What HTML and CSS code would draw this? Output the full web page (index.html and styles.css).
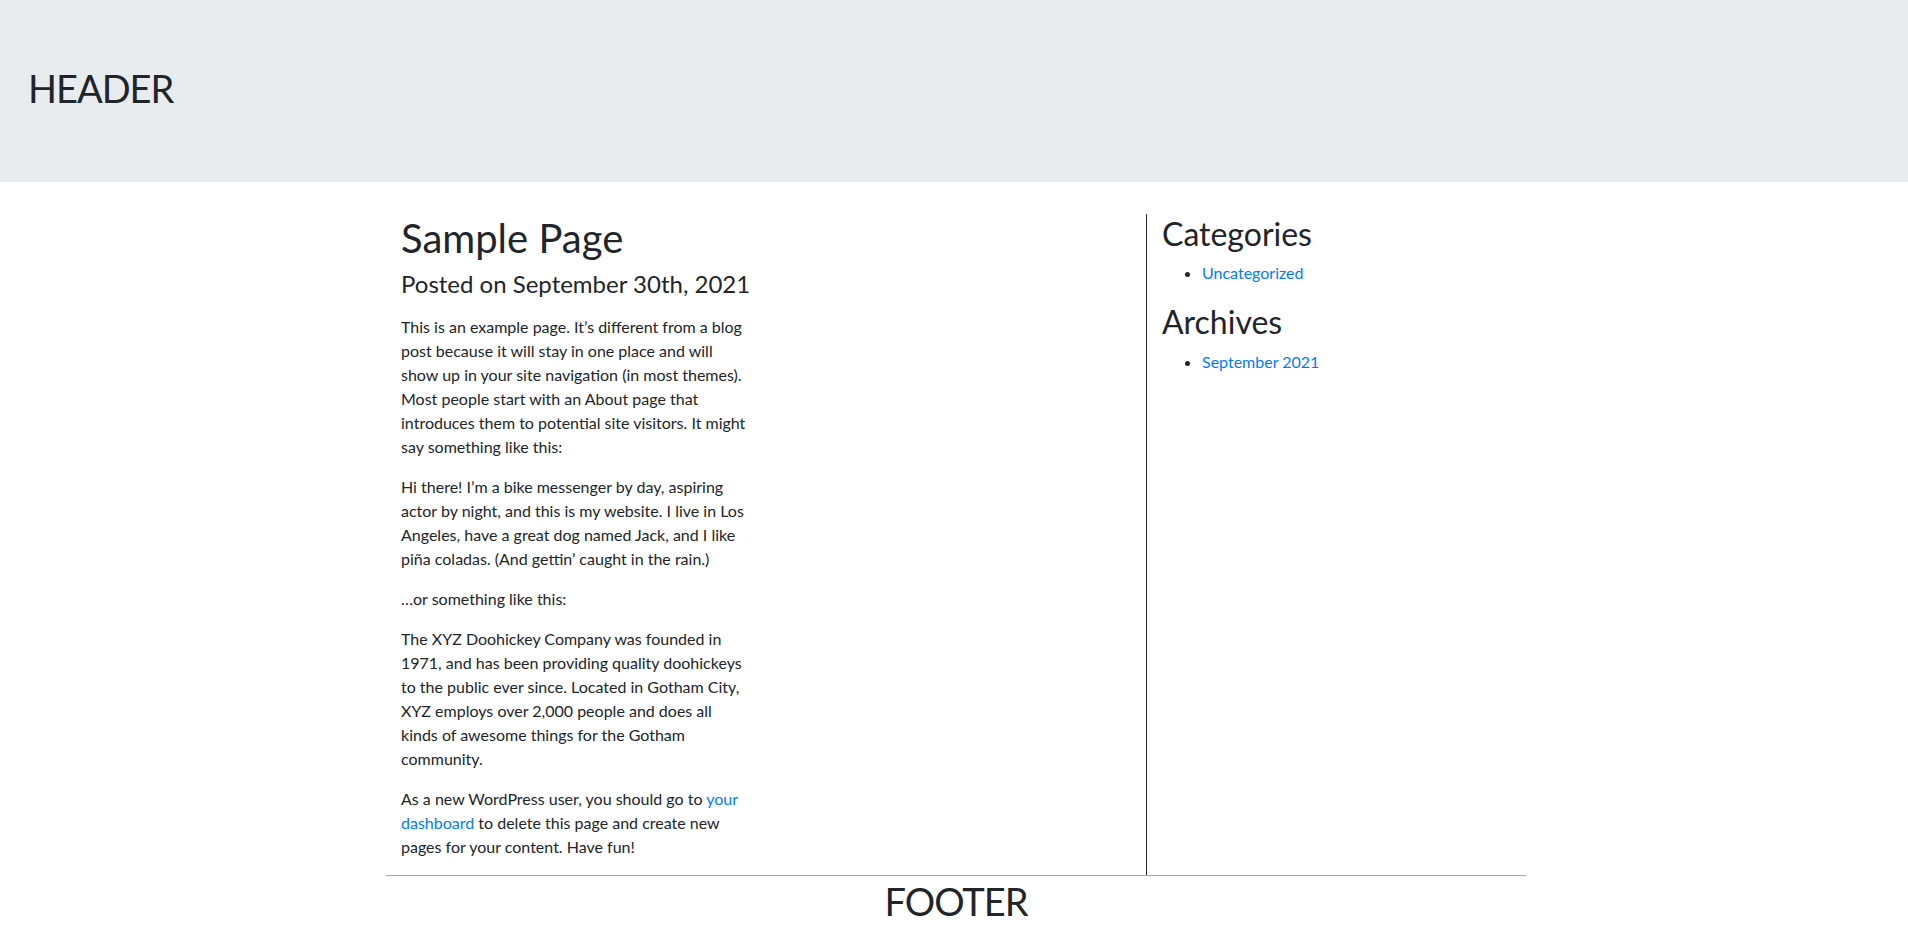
FILE: index.html
```html
<!DOCTYPE html>
<html lang="en">
<head>
<meta charset="utf-8">
<title>Sample Page</title>
<link rel="stylesheet" href="styles.css">
</head>
<body>
<header class="site-header">
  <h1 class="site-title">HEADER</h1>
</header>
<div class="container">
  <div class="content-row">
    <main class="main-col">
      <h1 class="page-title">Sample Page</h1>
      <h4 class="posted-on">Posted on September 30th, 2021</h4>
      <div class="entry">
        <p>This is an example page. It’s different from a blog post because it will stay in one place and will show up in your site navigation (in most themes). Most people start with an About page that introduces them to potential site visitors. It might say something like this:</p>
        <p>Hi there! I’m a bike messenger by day, aspiring actor by night, and this is my website. I live in Los Angeles, have a great dog named Jack, and I like piña coladas. (And gettin’ caught in the rain.)</p>
        <p>…or something like this:</p>
        <p>The XYZ Doohickey Company was founded in 1971, and has been providing quality doohickeys to the public ever since. Located in Gotham City, XYZ employs over 2,000 people and does all kinds of awesome things for the Gotham community.</p>
        <p>As a new WordPress user, you should go to <a href="#">your dashboard</a> to delete this page and create new pages for your content. Have fun!</p>
      </div>
    </main>
    <aside class="sidebar">
      <h2 class="widget-title">Categories</h2>
      <ul class="widget-list">
        <li><a href="#">Uncategorized</a></li>
      </ul>
      <h2 class="widget-title">Archives</h2>
      <ul class="widget-list">
        <li><a href="#">September 2021</a></li>
      </ul>
    </aside>
  </div>
  <footer class="site-footer">
    <h1 class="footer-title">FOOTER</h1>
  </footer>
</div>
</body>
</html>
```
FILE: styles.css
```css
* {
  box-sizing: border-box;
}

html, body {
  margin: 0;
  padding: 0;
}

body {
  font-family: Lato, "Noto Sans", sans-serif;
  font-size: 16px;
  line-height: 1.5;
  color: #212529;
  background: #fff;
}

a {
  color: #007bff;
  text-decoration: none;
}

h1, h2, h4 {
  font-weight: 400;
  margin: 0;
}

.site-header {
  background: #e9ecef;
  height: 182px;
  padding: 64px 28px 0;
}

.site-title {
  font-size: 38px;
  line-height: 48px;
  letter-spacing: -1px;
}

.container {
  width: 1140px;
  margin-left: calc(50% - 568px);
}

.content-row {
  display: flex;
  margin-top: 32px;
}

.main-col {
  width: 760px;
  padding: 0 15px;
}

.page-title {
  font-size: 40px;
  line-height: 48px;
  margin-bottom: 8px;
}

.posted-on {
  font-size: 24px;
  line-height: 28.8px;
  margin-bottom: 16px;
}

.entry {
  width: 350px;
}

.entry p {
  margin: 0 0 16px;
}

.sidebar {
  flex: 1;
  border-left: 1px solid #212529;
  padding: 1px 15px 0;
}

.widget-title {
  font-size: 32px;
  line-height: 38.4px;
  margin-bottom: 8px;
}

.widget-list {
  margin: 0 0 18px;
  padding-left: 40px;
}

.site-footer {
  border-top: 1px solid #a6a6a6;
  text-align: center;
  padding-top: 1px;
}

.footer-title {
  font-size: 38px;
  line-height: 48px;
  letter-spacing: -1px;
}
```
